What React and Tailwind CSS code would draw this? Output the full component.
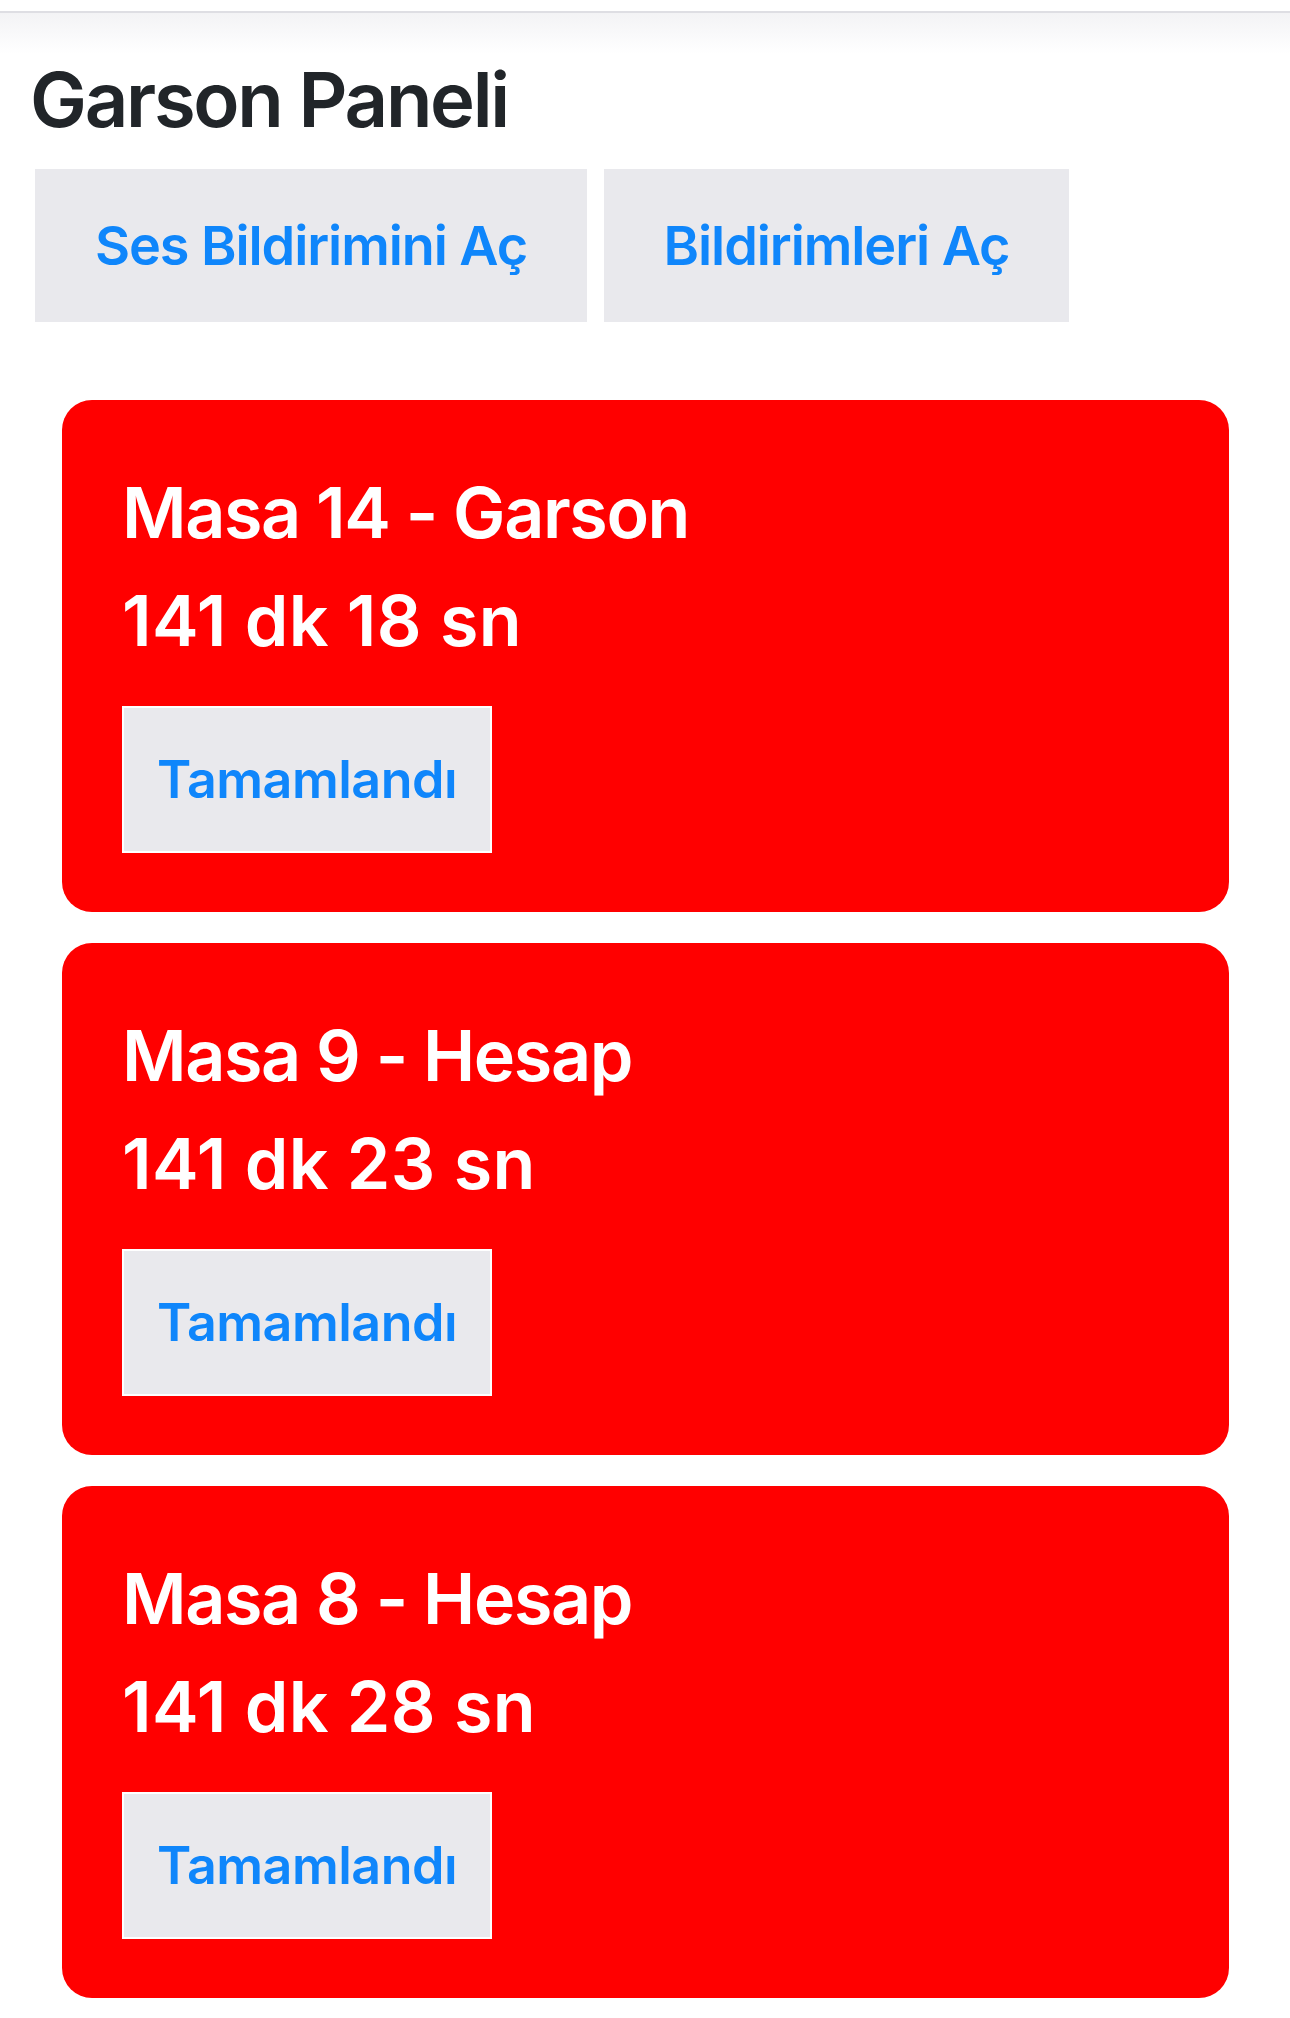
import React from "react";

const requests = [
  { title: "Masa 14 - Garson", time: "141 dk 18 sn" },
  { title: "Masa 9 - Hesap", time: "141 dk 23 sn" },
  { title: "Masa 8 - Hesap", time: "141 dk 28 sn" },
];

function RequestCard({ title, time }) {
  return (
    <div className="w-[1167px] rounded-[30px] bg-[#ff0000] px-[60px] pt-[71px] pb-[59px] text-white">
      <h2 className="m-0 text-[70px] font-semibold leading-[84px] tracking-[-0.02em]">{title}</h2>
      <div className="mt-[24px] text-[70px] font-semibold leading-[84px] tracking-[0.005em]">{time}</div>
      <button className="mt-[43px] flex h-[147px] w-[370px] items-center justify-center border-2 border-white bg-[#e9e9ed] text-[52px] font-semibold tracking-[-0.01em] text-[#0f86fb]">
        Tamamlandı
      </button>
    </div>
  );
}

export default function App() {
  return (
    <div
      className="min-h-[2018px] w-[1290px] bg-white"
      style={{ fontFamily: "Inter, 'Noto Sans', sans-serif" }}
    >
      <div className="h-[11px] bg-white" />
      <div className="h-[2px] bg-[#dedee3]" />
      <div className="h-[41px] bg-gradient-to-b from-[#f3f3f5] to-white" />
      <div className="px-[30px]">
        <h1 className="m-0 text-[76px] font-semibold leading-[91px] tracking-[-0.03em] text-[#212529]">
          Garson Paneli
        </h1>
        <div className="mt-[24px] ml-[5px] flex gap-[17px]">
          <button className="flex h-[153px] w-[552px] items-center justify-center bg-[#e9e9ed] text-[54px] font-semibold tracking-[-0.02em] text-[#0f86fb]">
            Ses Bildirimini Aç
          </button>
          <button className="flex h-[153px] w-[465px] items-center justify-center bg-[#e9e9ed] text-[54px] font-semibold tracking-[-0.02em] text-[#0f86fb]">
            Bildirimleri Aç
          </button>
        </div>
        <div className="mt-[78px] ml-[32px] flex flex-col gap-[31px]">
          {requests.map((r) => (
            <RequestCard key={r.title} title={r.title} time={r.time} />
          ))}
        </div>
      </div>
    </div>
  );
}
